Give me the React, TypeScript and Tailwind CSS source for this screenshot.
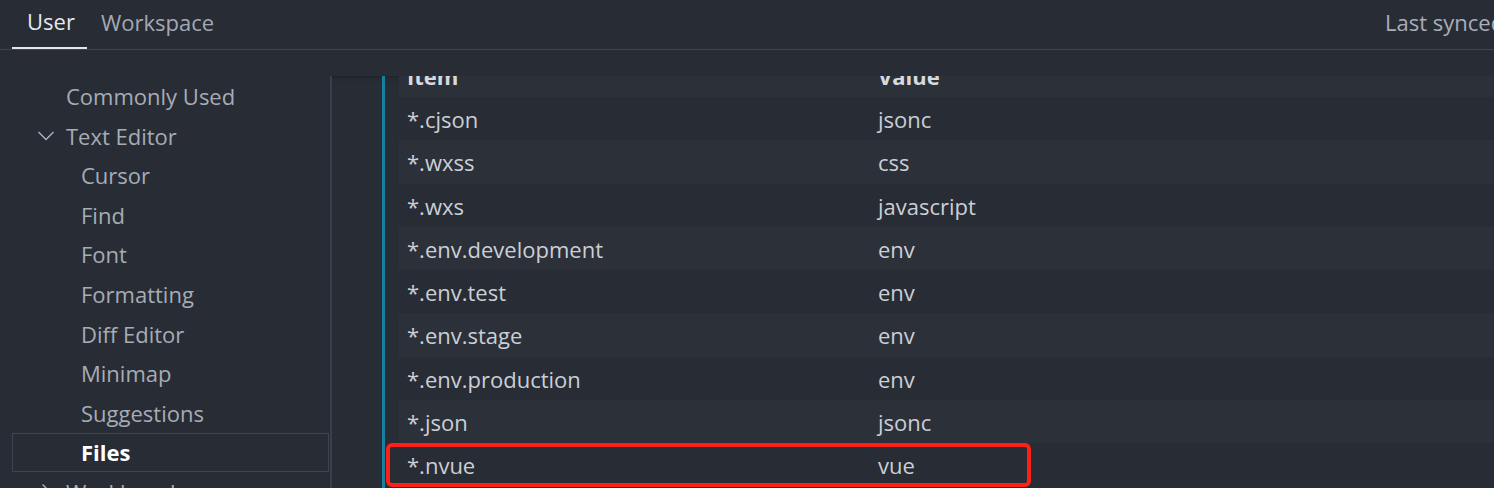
import React from "react";

const sideItems: { label: string; level: number; chevron?: "down" | "right"; active?: boolean }[] = [
  { label: "Commonly Used", level: 0 },
  { label: "Text Editor", level: 0, chevron: "down" },
  { label: "Cursor", level: 1 },
  { label: "Find", level: 1 },
  { label: "Font", level: 1 },
  { label: "Formatting", level: 1 },
  { label: "Diff Editor", level: 1 },
  { label: "Minimap", level: 1 },
  { label: "Suggestions", level: 1 },
  { label: "Files", level: 1, active: true },
  { label: "Workbench", level: 0, chevron: "right" },
];

const rows: [string, string][] = [
  ["*.cjson", "jsonc"],
  ["*.wxss", "css"],
  ["*.wxs", "javascript"],
  ["*.env.development", "env"],
  ["*.env.test", "env"],
  ["*.env.stage", "env"],
  ["*.env.production", "env"],
  ["*.json", "jsonc"],
  ["*.nvue", "vue"],
];

function Chevron({ dir }: { dir: "down" | "right" }) {
  return (
    <svg width="18" height="18" viewBox="0 0 18 18" className="shrink-0">
      {dir === "down" ? (
        <polyline points="1.5,5 9,12.5 16.5,5" fill="none" stroke="#abb2bf" strokeWidth="1.4" />
      ) : (
        <polyline points="5.5,1.5 13,9 5.5,16.5" fill="none" stroke="#abb2bf" strokeWidth="1.4" />
      )}
    </svg>
  );
}

export default function App() {
  return (
    <div
      className="w-[1494px] h-[488px] overflow-hidden bg-[#282c34] text-[22px]"
      style={{ fontFamily: '"Open Sans", "Noto Sans", sans-serif' }}
    >
      {/* tabs */}
      <div className="h-[50px] flex items-end border-b border-[#3e4452]">
        <div className="ml-[12px] h-[49px] pl-[15px] pr-[12px] pb-[5px] flex items-center border-b-2 border-[#e4e6ea] text-[#e6e8ec]">
          User
        </div>
        <div className="h-[49px] pl-[14px] pr-[15px] pb-[5px] flex items-center text-[#a3a9b4]">Workspace</div>
        <div className="ml-auto w-[109px] h-[49px] pb-[5px] flex items-center overflow-hidden whitespace-nowrap text-[#a9aeb8]">
          Last synced: 2 hours ago
        </div>
      </div>

      <div className="flex pt-[26px] h-[438px]">
        {/* sidebar */}
        <div className="w-[332px] shrink-0 border-r-2 border-[#3a3f4a] pl-[12px] pt-[1px]">
          {sideItems.map((it) => (
            <div
              key={it.label}
              className={`h-[39.56px] w-[317px] flex items-center whitespace-nowrap ${
                it.active ? "border border-[#3e4452] font-bold text-white" : "text-[#a6acb6]"
              }`}
            >
              <div className={`${it.level === 0 ? "w-[54px]" : "w-[69px]"} shrink-0 flex justify-start pl-[25px]`}>
                {it.chevron && <Chevron dir={it.chevron} />}
              </div>
              <span className={it.active ? "-ml-px" : ""}>{it.label}</span>
            </div>
          ))}
        </div>

        {/* content */}
        <div className="flex-1 relative overflow-hidden shadow-[inset_0_5px_4px_-4px_#1d2026]">
          <div className="flex pl-[50px] h-full">
            <div className="w-[3px] bg-[#15809f] shrink-0" />
            <div className="flex-1 ml-[14px] -mt-[22.25px]">
              <div className="h-[43.25px] pt-[2px] flex items-center bg-[#2c3039] font-bold text-[#d6d9de]">
                <div className="w-[479px] pl-[8px]">Item</div>
                <div>Value</div>
              </div>
              {rows.map(([k, v], i) => (
                <div
                  key={k}
                  className={`relative h-[43.25px] pt-[2px] flex items-center text-[#cbcfd6] ${
                    i % 2 === 1 ? "bg-[#2c3039]" : ""
                  }`}
                >
                  <div className="w-[479px] pl-[8px]">{k}</div>
                  <div>{v}</div>
                  {k === "*.nvue" && (
                    <div className="absolute left-[-13px] top-0 w-[645px] h-[44px] border-4 border-[#ff1f17] rounded-[6px]" />
                  )}
                </div>
              ))}
            </div>
          </div>
        </div>
      </div>
    </div>
  );
}
